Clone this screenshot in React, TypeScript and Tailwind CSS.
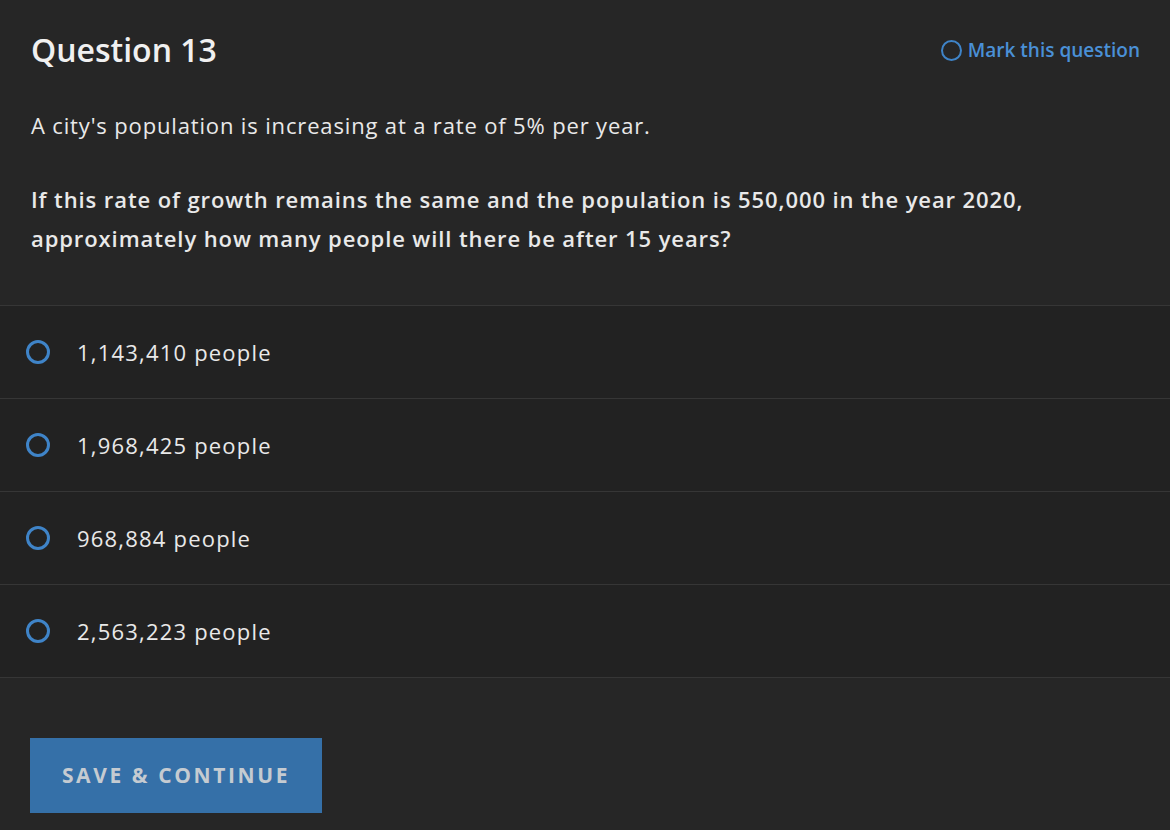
import React from "react";

const options = ["1,143,410 people", "1,968,425 people", "968,884 people", "2,563,223 people"];

function Ring({ size, stroke }: { size: number; stroke: number }) {
  const r = (size - stroke) / 2;
  return (
    <svg width={size} height={size} viewBox={`0 0 ${size} ${size}`} className="shrink-0">
      <circle cx={size / 2} cy={size / 2} r={r} fill="none" stroke="#3f84c8" strokeWidth={stroke} />
    </svg>
  );
}

export default function App() {
  return (
    <div
      className="w-[1170px] h-[830px] bg-[#262626] text-[#e9e9e9] overflow-hidden"
      style={{ fontFamily: "'Open Sans', Lato, sans-serif" }}
    >
      <div className="px-[31px] pt-[30px] pb-[47px]">
        <div className="flex items-center justify-between">
          <h1 className="text-[32px] leading-[40px] font-semibold text-[#f0f0f0]">Question 13</h1>
          <div className="flex items-center gap-[6px] text-[19px] font-semibold text-[#4a90d6] -mr-[1px]">
            <Ring size={21} stroke={2} />
            <span>Mark this question</span>
          </div>
        </div>
        <p className="mt-[40px] text-[22px] leading-[30px] tracking-[0.85px]">
          A city's population is increasing at a rate of 5% per year.
        </p>
        <p className="mt-[40px] text-[22px] leading-[39px] font-semibold tracking-[0.9px]">
          If this rate of growth remains the same and the population is 550,000 in the year 2020,
          <br />
          approximately how many people will there be after 15 years?
        </p>
      </div>
      <div className="bg-[#222222] border-t border-[#363636]">
        {options.map((o) => (
          <div key={o} className="h-[93px] flex items-center gap-[27px] pl-[26px] border-b border-[#363636]">
            <Ring size={24} stroke={3} />
            <span className="text-[22px] tracking-[1.2px]">{o}</span>
          </div>
        ))}
      </div>
      <div className="px-[30px] pt-[60px]">
        <button className="w-[292px] h-[75px] bg-[#3570a8] text-[#c5cbd1] text-[21px] font-bold tracking-[2.6px]">
          SAVE &amp; CONTINUE
        </button>
      </div>
    </div>
  );
}
